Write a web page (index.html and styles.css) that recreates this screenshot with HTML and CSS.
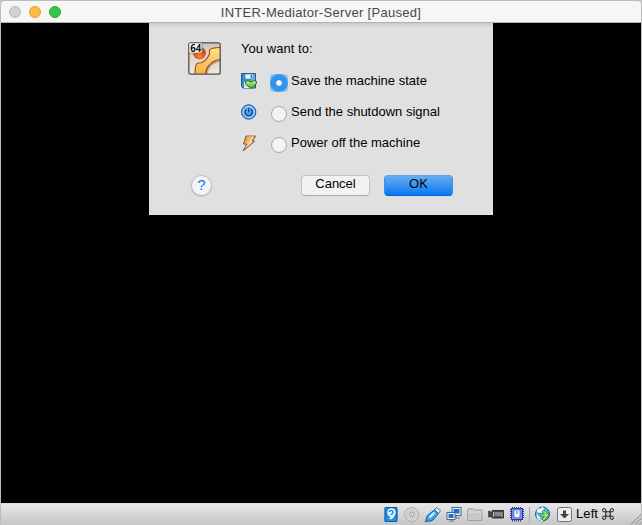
FILE: index.html
```html
<!DOCTYPE html>
<html lang="en">
<head>
<meta charset="utf-8">
<title>INTER-Mediator-Server [Paused]</title>
<link rel="stylesheet" href="styles.css">
</head>
<body>
<div class="window">
  <header class="titlebar">
    <div class="lights"><i class="light"></i><i class="light minimize"></i><i class="light expand"></i></div>
    <h1 class="title">INTER-Mediator-Server [Paused]</h1>
  </header>
  <main class="screen">
    <section class="sheet">
      <div class="content">
        <svg class="guest" viewBox="0 0 33 33">
          <defs>
            <linearGradient id="paper" x2="0" y2="1"><stop stop-color="#d0c6b8"/><stop offset="1" stop-color="#eee8de"/></linearGradient>
            <linearGradient id="gold" x2="0" y2="1"><stop stop-color="#ffe08c"/><stop offset="1" stop-color="#f9ac40"/></linearGradient>
            <radialGradient id="ball" cy=".8"><stop stop-color="#ff8a20"/><stop offset="1" stop-color="#df4308"/></radialGradient>
            <clipPath id="guestClip"><rect x="1" y="1" width="31" height="31" rx="2"/></clipPath>
          </defs>
          <rect x=".8" y=".8" width="31.4" height="31.4" rx="2" fill="url(#paper)"/>
          <g clip-path="url(#guestClip)">
            <circle cx="11.5" cy="11" r="6" fill="url(#ball)" stroke="#b94013" stroke-width=".6"/>
            <path d="M19 34Q19 27 22 24Q27 19 34 19" fill="none" stroke="#b7aca0" stroke-width="2"/>
            <path d="M34 5.500Q23 5.500 21.500 8V12Q19 18 14 20.500L9 21.500Q7 23 7 34H17.500Q17.500 27 21 23.500Q26 17.500 34 17.500Z" fill="url(#gold)" stroke="#a9441b" stroke-width="1.100"/>
          </g>
          <rect x=".8" y=".8" width="31.4" height="31.4" rx="2" fill="none" stroke="#554f49" stroke-width="1.300"/>
          <path d="M1 1H14V9.500Q14 11 12 11H1Z" fill="#fff" stroke="#77716b" stroke-width=".7"/>
          <text x="2.200" y="9.600" class="bits" textLength="11" lengthAdjust="spacingAndGlyphs">64</text>
        </svg>
        <div class="choices">
          <p class="prompt">You want to:</p>
          <label class="choice">
            <svg class="symbol" viewBox="0 0 17 17"><defs><linearGradient id="disk"><stop stop-color="#3686c9"/><stop offset="1" stop-color="#70b9e7"/></linearGradient><linearGradient id="heart" x2="0" y2="1"><stop stop-color="#d7ff98"/><stop offset="1" stop-color="#39a91c"/></linearGradient></defs><path d="M.5.500H14.500V15H2L.500 13.500Z" fill="url(#disk)" stroke="#1a5b9b"/><path d="M4 1H12V6H4Z" fill="#eef9ff" stroke="#2e79b9" stroke-width=".7"/><path d="M9.500 2H11V5H9.500Z" fill="#287bb8"/><path d="M3 9H12V15H3Z" fill="#edf6fa"/><path d="M3 11H6M3 13H7" stroke="#a4bdc9"/><path d="M10 9.200Q13 6 15.500 8.500Q16.500 11 10 15.500Q3.500 11 4.500 8.500Q7 6.500 10 9.200Z" fill="url(#heart)" stroke="#246d13"/></svg>
            <i class="radio selected"></i><span>Save the machine state</span>
          </label>
          <label class="choice">
            <svg class="symbol" viewBox="0 0 17 17"><defs><linearGradient id="power" x2="0" y2="1"><stop stop-color="#77b2f5"/><stop offset="1" stop-color="#4c99eb"/></linearGradient></defs><circle cx="7.700" cy="8" r="7.200" fill="#4288d4" stroke="#174c8d" stroke-width=".9"/><circle cx="7.700" cy="8" r="5.800" fill="url(#power)" stroke="#c5e5ff"/><path d="M5.500 5.300A3.500 3.500 0 1 0 9.900 5.300M7.700 4V8.500" fill="none" stroke="#0b3c7c" stroke-width="1.200"/></svg>
            <i class="radio"></i><span>Send the shutdown signal</span>
          </label>
          <label class="choice">
            <svg class="symbol" viewBox="0 0 17 17"><defs><linearGradient id="bolt" x2="1" y2="1"><stop stop-color="#cb681b"/><stop offset=".5" stop-color="#ffd391"/><stop offset="1" stop-color="#ef7b17"/></linearGradient></defs><path d="M5 1H14.500L11 6H13.500L2 16L6 9H2.500Z" transform="translate(.7 .5)" fill="#aaa"/><path d="M5 1H14.500L11 6H13.500L2 15.800L6 9H2.500Z" fill="url(#bolt)" stroke="#7b4225" stroke-width=".8"/><path d="M6 2H12L9 7H11L6 11" fill="none" stroke="#ffe5ad" stroke-width=".8"/></svg>
            <i class="radio"></i><span>Power off the machine</span>
          </label>
        </div>
      </div>
      <footer class="actions"><button class="help">?</button><button class="button">Cancel</button><button class="button primary">OK</button></footer>
    </section>
  </main>
  <footer class="statusbar">
    <svg class="status" viewBox="0 0 17 17"><rect x="2" y="1.500" width="12" height="14" rx="1" fill="#248edf" stroke="#075ca9" stroke-width="1.200"/><circle cx="8.500" cy="6.500" r="4.200" fill="#e6f6ff"/><path d="M4.500 8.500L11.500 8.500Q11 12.500 7.500 13.500L6 12L8.500 10.500" fill="#e6f6ff"/><path d="M6 6Q8 3 10 5.500Q10.500 8 7.500 8.500" fill="none" stroke="#1479c9" stroke-width="1.200"/></svg>
    <svg class="status" viewBox="0 0 17 17"><circle cx="7.700" cy="8.500" r="7" fill="#d8d8d8" stroke="#aaa"/><circle cx="7.700" cy="8.500" r="4.500" fill="none" stroke="#c5c5c5"/><circle cx="7.700" cy="8.500" r="2.400" fill="#eee" stroke="#999"/><circle cx="7.700" cy="8.500" r="1" fill="#aaa"/></svg>
    <svg class="status" viewBox="0 0 17 17"><path d="M11.500 1.500L15.500 4.500L13.500 7.500L9.500 4Z" fill="#eef2f5" stroke="#67737c"/><path d="M9.500 4L13.500 7.500L8 14Q5 16 2 15L.500 16L1 14Q1 11 3.500 8.500Z" fill="#3da7ed" stroke="#1357a0"/><path d="M9.500 6.500L4.500 11.500" stroke="#d7f3ff" stroke-width="2"/></svg>
    <svg class="status" viewBox="0 0 17 17"><rect x="6" y="1.500" width="9" height="8" fill="#eaf0f5" stroke="#4a6885"/><path d="M7.500 3H13.500V7.500H7.500Z" fill="#1478cf"/><path d="M10 10V12H14" fill="none" stroke="#617789"/><rect x="1" y="6.500" width="8" height="7" fill="#eff5fa" stroke="#4a6885"/><path d="M2.500 8H7.500V12H2.500Z" fill="#1478cf"/><path d="M3 15H8" stroke="#697985"/></svg>
    <svg class="status" viewBox="0 0 17 17"><path d="M.5 14.500V4L2 2.500H6L7.500 4H15V14.500Z" fill="#c9c9c9" stroke="#a2a2a2"/><path d="M1 6H14.500" stroke="#e4e4e4"/></svg>
    <svg class="status" viewBox="0 0 17 17"><path d="M.8 5L4 7V4.500H15.500V12H4V10L.8 11Z" fill="#4c4c4c" stroke="#262626" stroke-width=".9"/><path d="M6.500 6H13V10H6.500Z" fill="#888"/><path d="M5.500 6V11M14 6V11" stroke="#bbb"/></svg>
    <svg class="status" viewBox="0 0 17 17"><path d="M3.500 1V3M5.500 1V3M7.500 1V3M9.500 1V3M11.500 1V3M3.500 13V15.500M5.500 13V15.500M7.500 13V15.500M9.500 13V15.500M11.500 13V15.500M1 3.500H3M1 5.500H3M1 7.500H3M1 9.500H3M1 11.500H3M13 3.500H15M13 5.500H15M13 7.500H15M13 9.500H15M13 11.500H15" stroke="#253aa8"/><rect x="2.500" y="2.500" width="11" height="11" fill="#7590df" stroke="#263ba5"/><path d="M5 4V9.500Q5 12 8 12Q11 12 11 9.500V4Z" fill="#f1f5ff" stroke="#5267ba" stroke-width=".7"/><path d="M8 5V8" stroke="#4e63ad"/></svg>
    <i class="divider"></i>
    <svg class="status globe" viewBox="0 0 17 17"><circle cx="7.500" cy="8" r="7" fill="#58b2e8" stroke="#225d97"/><path d="M2 5Q6 6 8 1.500M3 3L7 7" fill="none" stroke="#edfaff" stroke-width="2.500"/><path d="M1.500 8L5.500 12H4Q5 14 8 14V15Q2 15 1.500 9Z" fill="#edfaff"/><path d="M7 6L9 4L14 9L9 15L7 13L9.500 10.500Q5 11 5 7Q6 8.500 9.500 8Z" fill="#a1e866" stroke="#277c29" stroke-width=".8"/></svg>
    <svg class="status key" viewBox="0 0 17 17"><rect x="1.500" y="1.500" width="14" height="14" rx="2" fill="#ededed" stroke="#737373"/><path d="M7 4.500H10V8H13L8.500 12.500L4 8H7Z" fill="#444"/></svg>
    <span class="host">Left <svg class="command" viewBox="0 0 11 11"><path d="M3.500 3.500H7.500V7.500H3.500ZM3.500 3.500H2.200A1.500 1.500 0 1 1 3.500 2.200ZM7.500 3.500V2.200A1.500 1.500 0 1 1 8.800 3.500ZM7.500 7.500H8.800A1.500 1.500 0 1 1 7.500 8.800ZM3.500 7.500V8.800A1.500 1.500 0 1 1 2.200 7.500Z" fill="none" stroke="#111" stroke-width=".9"/></svg></span>
    <svg class="grip" viewBox="0 0 12 12"><path d="M1 11.500L11.500 1M5 11.500L11.500 5M9 11.500L11.500 9" stroke="#858585"/></svg>
  </footer>
</div>
</body>
</html>
```
FILE: styles.css
```css
* { box-sizing: border-box; }
body { margin: 0; background: #c9c9c9; font: 13px "Liberation Sans", Arial, sans-serif; color: #000; }
.window { width: 642px; height: 525px; display: flex; flex-direction: column; overflow: hidden; border: 1px solid #bcbcbc; border-bottom: 0; border-radius: 5px 5px 0 0; }
.titlebar { height: 22px; flex: none; display: grid; grid-template-columns: 60px 1fr 60px; align-items: center; background: #f6f6f6; border-bottom: 1px solid #b3b3b3; }
.lights { display: flex; gap: 8px; padding-left: 8px; }
.light { width: 12px; height: 12px; border-radius: 50%; background: #d0d0d0; border: 1px solid #b9b9b9; flex: none; }
.minimize { background: #ffbc40; border-color: #dfa033; }
.expand { background: #34c84a; border-color: #27aa35; }
.title { margin: 2px 0 0; font-size: 13px; line-height: 20px; font-weight: 400; color: #484848; text-align: center; letter-spacing: .3px; white-space: nowrap; }
.screen { flex: 1; min-height: 0; background: #000; }
.sheet { width: 344px; height: 192px; margin-left: 148px; background: linear-gradient(#c9c9c9, #e0e0e0 5px); padding: 15px 39px 0 40px; }
.content { display: flex; height: 137px; }
.guest { width: 33px; height: 33px; margin: 4px 19px 0 -1px; flex: none; }
.bits { font: bold 10px "Open Sans", sans-serif; fill: #111; }
.choices { display: flex; flex-direction: column; margin-left: 1px; }
.prompt { margin: 0; height: 27px; line-height: 21px; letter-spacing: .05px; }
.choice { height: 31px; display: flex; align-items: center; white-space: nowrap; }
.symbol { width: 17px; height: 17px; margin: 1px 13px 0 0; flex: none; }
.radio { width: 16px; height: 16px; border: 1px solid #aaa; border-radius: 50%; background: #f3f3f3; margin: 4px 4px 0 0; flex: none; }
.selected { width: 18px; height: 18px; margin: 4px 3px 0 -1px; border: 0; background: radial-gradient(circle, #fff 0 2.3px, #3493ed 3.2px 8.3px, #8ec3f1 9.3px); border-radius: 4px; }
.actions { display: flex; align-items: flex-start; }
.help, .button { font: 13px "Liberation Sans", Arial, sans-serif; padding: 0; }
.help { width: 21px; height: 21px; margin: 0 89px 0 2px; border: 1px solid #bababa; border-radius: 50%; background: #f5f5f5; color: #087cf7; font-size: 15px; line-height: 16px; padding-bottom: 2px; box-shadow: 0 1px 1px #c5c5c5; }
.button { width: 69px; height: 21px; margin-right: 14px; border: 1px solid #c1c1c1; border-bottom-color: #aaa; border-radius: 4px; background: #f2f2f2; line-height: 15px; padding-bottom: 4px; }
.primary { margin: 0; border-color: #5aa6eb #3a90e7 #0065db; background: linear-gradient(#68aeef, #0878f3); }
.statusbar { height: 22px; flex: none; display: flex; align-items: center; padding-left: 382px; border-top: 1px solid #dedede; background: linear-gradient(#e6e6e6, #c6c6c6); }
.status { width: 17px; height: 17px; flex: none; margin: -1px 4px 0 0; }
.divider { width: 1px; height: 16px; background: #aaa; margin: 0 5px 0 -1px; flex: none; }
.globe { margin-right: 4px; }
.key { margin-right: 3px; }
.host { width: 54px; flex: none; white-space: pre; line-height: 18px; padding-bottom: 2px; letter-spacing: .1px; }
.command { width: 12px; height: 12px; vertical-align: -2px; }
.grip { width: 12px; height: 12px; align-self: flex-end; flex: none; }
```
